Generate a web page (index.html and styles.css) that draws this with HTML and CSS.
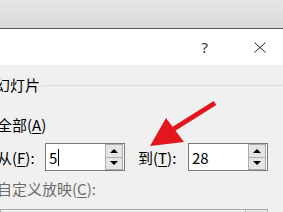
FILE: index.html
```html
<!DOCTYPE html>
<html lang="zh-CN">
<head>
    <meta charset="UTF-8">
    <title>打印范围</title>
    <link rel="stylesheet" href="styles.css">
</head>
<body>

<div class="backdrop"></div>

<div class="dialog">
    <div class="dialog-head">
        <span class="help">?</span>
        <span class="close">
            <svg width="12" height="11" viewBox="0 0 12 11">
                <path d="M0.5 0.5 L11.5 10.5 M11.5 0.5 L0.5 10.5" stroke="#222" stroke-width="1" fill="none"/>
            </svg>
        </span>
    </div>

    <div class="dialog-body">
        <div class="group-title">
            <span>幻灯片</span>
            <div class="group-line"></div>
        </div>

        <div class="option">全部(<u>A</u>)</div>

        <div class="range-row">
            <label class="range-label">从(<u>F</u>):</label>
            <div class="spin">
                <span class="spin-value">5<span class="caret"></span></span>
                <div class="spin-buttons">
                    <div class="spin-btn"><span class="tri-up"></span></div>
                    <div class="spin-btn"><span class="tri-down"></span></div>
                </div>
            </div>
            <label class="range-label to">到(<u>T</u>):</label>
            <div class="spin">
                <span class="spin-value">28</span>
                <div class="spin-buttons">
                    <div class="spin-btn"><span class="tri-up"></span></div>
                    <div class="spin-btn"><span class="tri-down"></span></div>
                </div>
            </div>
        </div>

        <div class="option disabled">自定义放映(<u>C</u>):</div>

        <div class="combo">
            <div class="combo-btn"></div>
        </div>
    </div>
</div>

<!-- red annotation arrow over the dialog -->
<svg class="annotation" width="283" height="212" viewBox="0 0 283 212">
    <line x1="215" y1="103" x2="172" y2="130" stroke="#e3161d" stroke-width="5"/>
    <polygon points="150,146 166,118 184,142" fill="#e3161d"/>
</svg>

</body>
</html>
```

FILE: styles.css
```css
body {
    margin: 0;
    width: 283px;
    height: 212px;
    overflow: hidden;
    background: #f0f0f0;
    font-family: "Noto Sans CJK SC", "Microsoft YaHei", sans-serif;
    font-size: 15px;
    color: #000;
    position: relative;
}

.backdrop {
    height: 28px;
    background: linear-gradient(#e6e6e6, #d9d9d9);
    border-bottom: 1px solid #5a5a5a;
}

.dialog-head {
    height: 36px;
    background: #fff;
    display: flex;
    align-items: center;
    justify-content: flex-end;
    padding-right: 17px;
}

.help {
    font-family: "Noto Sans", sans-serif;
    font-size: 15px;
    color: #333;
    margin-right: 46px;
}

.close {
    display: flex;
    width: 12px;
    height: 11px;
}

.dialog-body {
    padding: 10px 0 0 0;
}

.group-title {
    display: flex;
    align-items: center;
    height: 20px;
    line-height: 20px;
    margin-left: -5px;
}

.group-line {
    flex: 1;
    height: 1px;
    background: #dcdcdc;
    margin-left: 2px;
}

.option {
    height: 20px;
    line-height: 20px;
    margin-left: -3px;
    margin-top: 20px;
}

.option.disabled {
    color: #6d6d6d;
    margin-top: 8px;
}

u {
    text-decoration-thickness: 1px;
    text-underline-offset: 2px;
}

.range-row {
    display: flex;
    align-items: center;
    margin-top: 8px;
}

.range-label {
    width: 48px;
    margin-left: -3px;
}

.range-label.to {
    width: 50px;
    margin-left: 13px;
}

.spin {
    width: 80px;
    height: 28px;
    box-sizing: border-box;
    border: 1px solid #7a7a7a;
    background: #fff;
    display: flex;
    align-items: center;
    justify-content: space-between;
}

.spin-value {
    padding-left: 3px;
    display: flex;
    align-items: center;
}

.caret {
    display: inline-block;
    width: 1px;
    height: 17px;
    background: #000;
    margin-left: 1px;
}

.spin-buttons {
    display: flex;
    flex-direction: column;
    width: 18px;
    height: 26px;
    margin-right: 1px;
}

.spin-btn {
    flex: 1;
    box-sizing: border-box;
    border: 1px solid #adadad;
    background: #e5e5e5;
    display: flex;
    align-items: center;
    justify-content: center;
}

.spin-btn + .spin-btn {
    border-top: none;
}

.tri-up {
    width: 0;
    height: 0;
    border-left: 4px solid transparent;
    border-right: 4px solid transparent;
    border-bottom: 4px solid #000;
}

.tri-down {
    width: 0;
    height: 0;
    border-left: 4px solid transparent;
    border-right: 4px solid transparent;
    border-top: 4px solid #000;
}

.combo {
    margin-top: 10px;
    width: 268px;
    height: 24px;
    box-sizing: border-box;
    border: 1px solid #a8a8a8;
    background: #f0f0f0;
    display: flex;
    justify-content: flex-end;
}

.combo-btn {
    width: 21px;
    border-left: 1px solid #b8b8b8;
    background: #e8e8e8;
}

.annotation {
    position: absolute;
    left: 0;
    top: 0;
}
```
